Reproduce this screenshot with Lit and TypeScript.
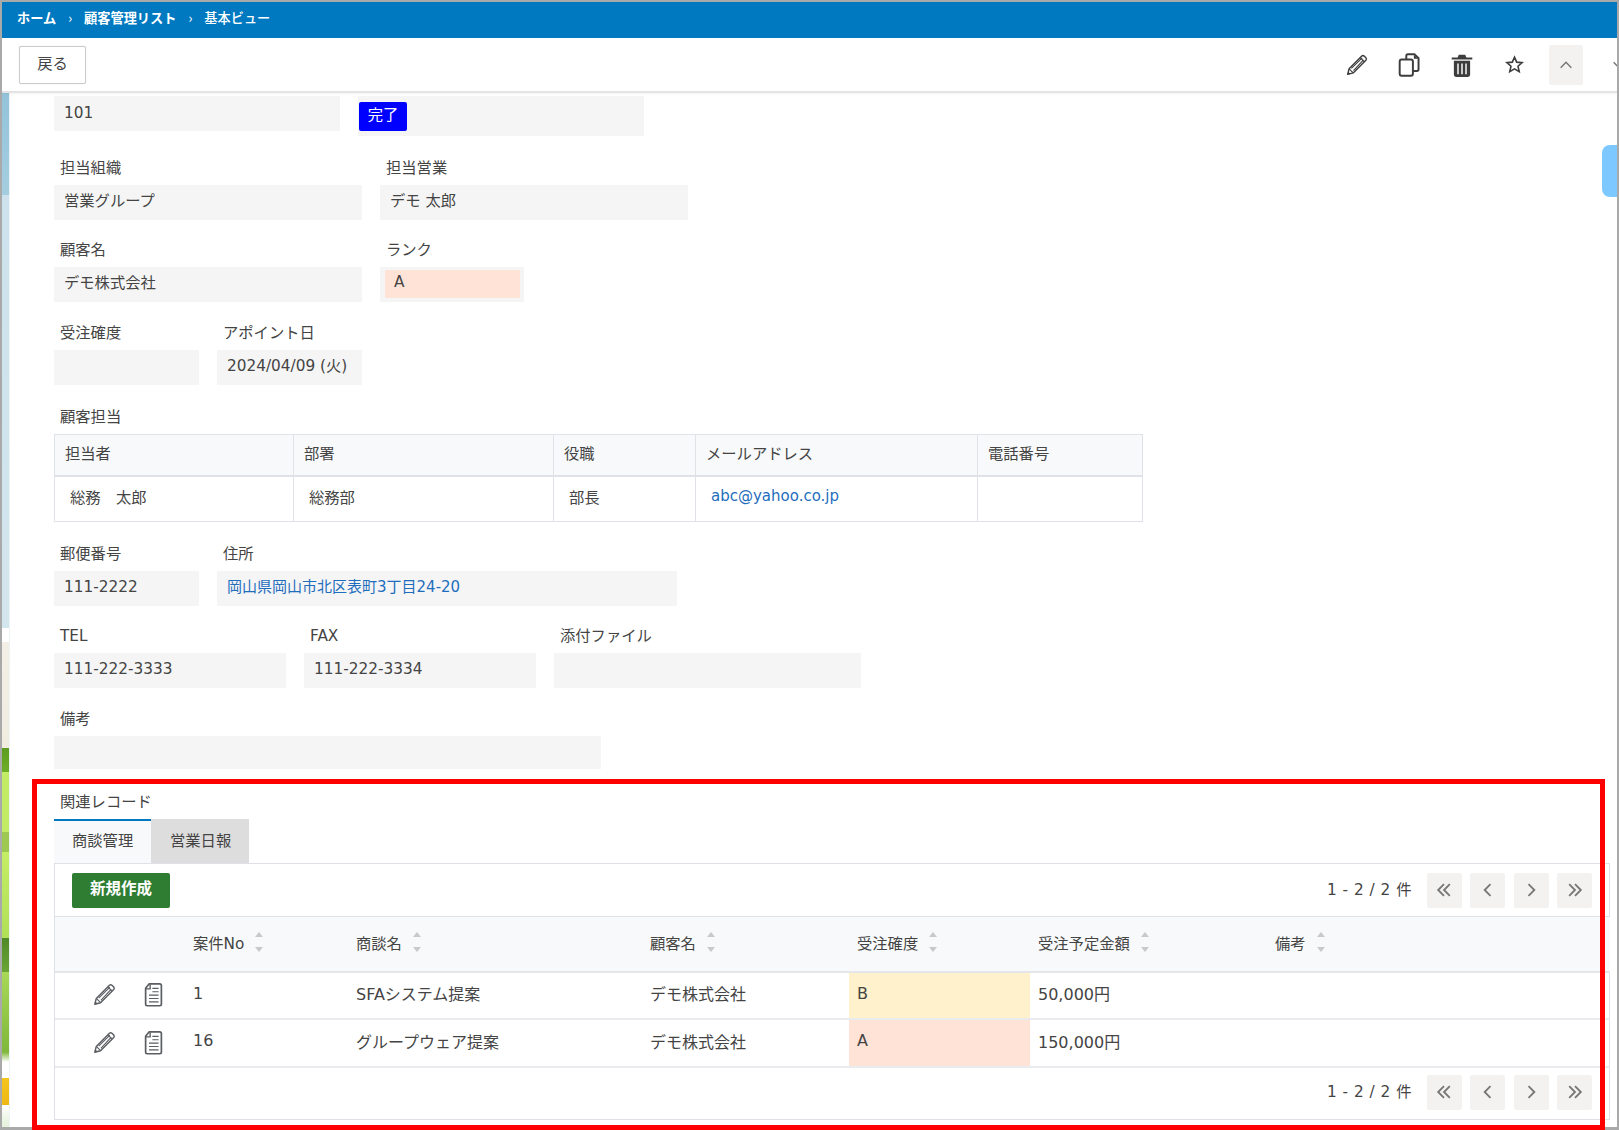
import { LitElement, html, css, svg } from "lit";
import { customElement } from "lit/decorators.js";

const pencil = svg`<path d="M3.4 20.6l1.3-5.1L16.4 3.8a1.6 1.6 0 0 1 2.2 0l1.6 1.6a1.6 1.6 0 0 1 0 2.2L8.5 19.3z" fill="none" stroke="currentColor" stroke-width="1.3" stroke-linejoin="round"/><path d="M4.7 15.5l3.8 3.8M15 5.2l3.8 3.8M6.8 15.2L16.8 5.4M8.8 17.2L18 7.2" fill="none" stroke="currentColor" stroke-width="1"/><path d="M3.2 20.8l.6-2.8 2.2 2.2z" fill="currentColor"/>`;
const docIcon = svg`<path d="M8.2 2.5h9.3a1.5 1.5 0 0 1 1.5 1.5v16.5a1.5 1.5 0 0 1-1.5 1.5h-11A1.5 1.5 0 0 1 5 20.500V6.500z" fill="none" stroke="currentColor" stroke-width="1.5" stroke-linejoin="round"/><path d="M5 7h4V2.800" fill="none" stroke="currentColor" stroke-width="1.2"/><path d="M11 6.500h5.500M11 9.500h5.500M8 12.500h8.500M8 15.500h8.500M8 18.500h8.500" stroke="currentColor" stroke-width="1"/>`;
const copyIcon = svg`<path d="M9.500 6.500V3.500a1.500 1.500 0 0 1 1.500-1.500h6l3.800 3.800v10.200a1.500 1.500 0 0 1-1.500 1.500H16" fill="none" stroke="currentColor" stroke-width="1.800" stroke-linejoin="round"/><path d="M16.500 2.500v3.800h3.800z" fill="currentColor"/><rect x="3.400" y="6.900" width="12.200" height="15" rx="1.800" fill="none" stroke="currentColor" stroke-width="1.800"/>`;
const trashIcon = svg`<path d="M2.500 5h19v2h-19zM9 2.500h6l1 2.500H8z" fill="currentColor"/><path d="M4.500 8h15v13a2 2 0 0 1-2 2h-11a2 2 0 0 1-2-2z" fill="currentColor"/><path d="M8.300 10.500v10M12 10.500v10M15.700 10.500v10" stroke="#e9e9e9" stroke-width="1.500"/>`;
const starIcon = svg`<path d="M12 3.600l2.500 5.700 6.200.6-4.700 4.100 1.400 6.100L12 17l-5.400 3.100L8 14 3.300 9.900l6.200-.6z" fill="none" stroke="currentColor" stroke-width="1.800" stroke-linejoin="miter"/>`;
const chevron = (d: string) => svg`<path d="${d}" fill="none" stroke="currentColor" stroke-width="2.200"/>`;

@customElement("app-root")
export class AppRoot extends LitElement {
  static styles = css`
    :host { display: block; position: relative; width: 1619px; height: 1130px; overflow: hidden; background: #fff;
      font-family: "DejaVu Sans", "Noto Sans CJK JP", sans-serif; font-size: 15.300px; color: #444; }
    * { box-sizing: border-box; }
    .frame { width: 1619px; height: 1130px; border: 2px solid #a9a9a9; border-bottom-width: 3px; overflow: hidden; display: flex; flex-direction: column; background: #fff; }
    .crumbs { flex: none; height: 36px; background: #0079c0; color: #fff; display: flex; align-items: center; padding: 0 0 5px 15px; font-size: 13.200px; font-weight: 700; font-family: "Noto Sans CJK JP", sans-serif; }
    .crumbs .sep { margin: 0 12px; font-weight: 400; font-size: 13px; }
    .crumbs .cur { font-weight: 500; }
    .toolbar { flex: none; height: 55px; border-bottom: 2px solid #e3e3e3; display: flex; align-items: center; padding-left: 17px; box-shadow: 0 1px 2px rgba(0,0,0,.05); position: relative; z-index: 1; }
    .back { width: 67px; height: 38px; border: 1px solid #ccc; border-radius: 2px; background: #fff; display: flex; align-items: center; justify-content: center; padding-bottom: 5px; box-shadow: 0 0 1px rgba(0,0,0,.2); }
    .tools { margin-left: auto; margin-right: -28px; display: flex; flex: none; }
    .slot { width: 52.400px; display: flex; justify-content: center; align-items: center; color: #3d3d3d; flex: none; }
    .slot svg { width: 26px; height: 26px; display: block; }
    .slot.small svg { width: 21px; height: 21px; }
    .sq { width: 34px; height: 40px; border-radius: 2px; display: flex; align-items: center; justify-content: center; color: #777; }
    .sq.on { background: #f3f2f1; }
    .sq svg { width: 16px; height: 16px; }
    .main { flex: 1; display: flex; min-height: 0; }
    .strip { flex: none; width: 8px; border-right: 1px solid #eef3f5;
      background: linear-gradient(to bottom,
        #93c3da 0, #a5cde0 102px, #cde2ec 102px, #d3e6ee 535px, #fff 535px, #fff 549px, #f3efe6 549px, #f1ece0 655px,
        #5c9c20 655px, #6fae28 679px, #c2ec66 679px, #c2ec66 739px, #9dc952 739px, #9dc952 759px, #c4ee66 759px, #b0e058 845px,
        #4f8a28 845px, #6aa536 879px, #a8d858 879px, #7fb83a 959px, #fff 969px, #fff 985px, #f4c51c 985px, #eeb814 1012px, #fff 1012px, #e8f2df 1030px); }
    .content { flex: 1; min-width: 0; padding: 3px 7px 0 44px; display: flex; flex-direction: column; }
    .row { display: flex; gap: 18px; align-items: flex-start; flex: none; }
    .g18 { margin-top: 18px; }
    .g19 { margin-top: 19px; }
    .g20 { margin-top: 20px; }
    .g21 { margin-top: 21px; }
    .g22 { margin-top: 22px; }
    .lab { height: 22px; line-height: 22px; padding: 1px 0 0 6px; margin-bottom: 7px; white-space: nowrap; }
    .val { height: 35px; background: #f5f5f5; padding: 5px 0 0 10px; line-height: 22px; white-space: nowrap; }
    .first { padding-top: 6px; width: 286px; }
    .status { width: 286px; height: 40px; background: #f5f5f5; padding: 6px 0 0 1px; }
    .badge { display: block; width: 48px; height: 29px; background: #0000ff; color: #fff; text-align: center; line-height: 27px; border-radius: 2px; }
    .w145 { width: 145px; }
    .w308 { width: 308px; }
    .w232 { width: 232px; }
    .w307 { width: 307px; }
    .w460 { width: 460px; }
    .w547 { width: 547px; height: 33px; }
    .rank { width: 144px; height: 35px; background: #f5f5f5; padding: 3px 4px 4px 5px; }
    .rank div { height: 28px; background: #ffe3d6; padding-left: 9px; line-height: 24px; border-radius: 1px; }
    a { color: #1f6ebd; text-decoration: none; font-size: 15px; }
    .sec { flex: none; height: 22px; line-height: 22px; padding-left: 6px; margin-bottom: 6px; white-space: nowrap; }
    table { border-collapse: collapse; table-layout: fixed; }
    .contact { width: 1088px; flex: none; }
    .contact th, .contact td { border: 1px solid #dfe2e7; font-weight: 400; text-align: left; }
    .contact th { height: 41px; background: #f8f9fa; padding: 0 0 6px 10px; border-bottom-width: 2px; }
    .contact td { height: 46px; padding: 0 0 5px 15px; }
    .c1 { width: 239px; }
    .c2 { width: 260px; }
    .c3 { width: 142px; }
    .c4 { width: 282px; }
    .c5 { width: 165px; }
    .tabs { display: flex; flex: none; height: 44px; }
    .tab { width: 97px; padding: 9px 0 0 18px; background: #f8f9fa; border-top: 2px solid #0079c0; line-height: 22px; white-space: nowrap; }
    .tab.off { background: #dddddd; border-top: 0; width: 98px; padding-top: 11px; padding-left: 19px; }
    .panel { flex: none; height: 257px; border: 1px solid #dee2e6; display: flex; flex-direction: column; }
    .bar { flex: none; display: flex; align-items: center; justify-content: space-between; padding: 0 17px; }
    .bar.top { height: 52px; }
    .bar.bottom { flex: 1; padding-bottom: 2px; }
    .new { width: 98px; height: 35px; background: #2e7d32; color: #fff; font-weight: 700; text-align: center; line-height: 28px; border-radius: 2px; font-size: 15.500px; font-family: "Noto Sans CJK JP", sans-serif; }
    .pager { display: flex; align-items: center; gap: 8.500px; margin-left: auto; }
    .count { margin-right: 6px; letter-spacing: .5px; padding-bottom: 5px; }
    .pg { width: 35px; height: 35px; background: #f3f2f1; border-radius: 2px; display: flex; align-items: center; justify-content: center; color: #777; }
    .pg svg { width: 20px; height: 20px; }
    .list { width: 1555px; flex: none; }
    .list th, .list td { font-weight: 400; text-align: left; padding: 0 0 4px 8px; white-space: nowrap; }
    .list th { height: 55px; background: #f8f9fa; border-top: 1px solid #dee2e6; border-bottom: 2px solid #e4e6ea; padding-bottom: 3px; }
    .list td { height: 47.500px; border-bottom: 2px solid #e9ebee; font-size: 16px; }
    .l0 { width: 130px; }
    .l1 { width: 163px; }
    .l2 { width: 294px; }
    .l3 { width: 207px; }
    .l4 { width: 181px; }
    .l5 { width: 237px; }
    .l6 { width: 343px; }
    .th { display: inline-flex; align-items: center; }
    .sort { display: inline-flex; flex-direction: column; gap: 10px; margin-left: 11px; }
    .sort i { display: block; width: 0; height: 0; border-left: 4px solid transparent; border-right: 4px solid transparent; }
    .sort .u { border-bottom: 5px solid #c9c9c9; }
    .sort .d { border-top: 5px solid #c9c9c9; }
    .list td.acts { padding: 0 0 0 36px; }
    .acts div { display: flex; align-items: center; color: #5a5d61; gap: 22px; padding-bottom: 1px; }
    .acts svg { width: 27px; height: 27px; display: block; }
    .list td.b { background: #fff1cc; }
    .list td.a { background: #ffe3d6; }
    .scrolltab { position: absolute; right: 2px; top: 145px; width: 15px; height: 52px; background: #7cc8ff; border-radius: 8px 0 0 8px; }
    .redbox { position: absolute; left: 32px; top: 779px; width: 1573px; height: 351px; border: 5px solid #ff0000; pointer-events: none; }
  `;

  private field(label: string, value: unknown, cls: string) {
    return html`<div><div class="lab">${label}</div><div class="val ${cls}">${value}</div></div>`;
  }

  private pager() {
    const b = (d: string) => html`<div class="pg"><svg viewBox="0 0 24 24">${chevron(d)}</svg></div>`;
    return html`<div class="pager">
      <span class="count">1 - 2 / 2 件</span>
      ${b("M12 5l-7 7 7 7M19 5l-7 7 7 7")}${b("M15 5l-7 7 7 7")}${b("M9 5l7 7-7 7")}${b("M5 5l7 7-7 7M12 5l7 7-7 7")}
    </div>`;
  }

  private sorted(t: string) {
    return html`<th><span class="th">${t}<span class="sort"><i class="u"></i><i class="d"></i></span></span></th>`;
  }

  private acts() {
    return html`<td class="acts"><div><svg viewBox="0 0 24 24">${pencil}</svg><svg viewBox="0 0 24 24">${docIcon}</svg></div></td>`;
  }

  render() {
    return html`<div class="frame">
      <div class="crumbs"><span>ホーム</span><span class="sep">›</span><span>顧客管理リスト</span><span class="sep">›</span><span class="cur">基本ビュー</span></div>
      <div class="toolbar">
        <div class="back">戻る</div>
        <div class="tools">
          <div class="slot"><svg viewBox="0 0 24 24">${pencil}</svg></div>
          <div class="slot"><svg viewBox="0 0 24 24">${copyIcon}</svg></div>
          <div class="slot"><svg viewBox="0 0 24 24">${trashIcon}</svg></div>
          <div class="slot small"><svg viewBox="0 0 24 24">${starIcon}</svg></div>
          <div class="slot"><div class="sq on"><svg viewBox="0 0 24 24">${chevron("M4 16l8-8 8 8")}</svg></div></div>
          <div class="slot"><div class="sq"><svg viewBox="0 0 24 24">${chevron("M4 8l8 8 8-8")}</svg></div></div>
        </div>
      </div>
      <div class="main">
        <div class="strip"></div>
        <div class="content">
          <div class="row">
            <div class="val first">101</div>
            <div class="status"><span class="badge">完了</span></div>
          </div>
          <div class="row g20">
            ${this.field("担当組織", "営業グループ", "w308")}
            ${this.field("担当営業", "デモ 太郎", "w308")}
          </div>
          <div class="row g18">
            ${this.field("顧客名", "デモ株式会社", "w308")}
            <div><div class="lab">ランク</div><div class="rank"><div>A</div></div></div>
          </div>
          <div class="row g19">
            ${this.field("受注確度", "", "w145")}
            ${this.field("アポイント日", "2024/04/09 (火)", "w145")}
          </div>
          <div class="sec g21">顧客担当</div>
          <table class="contact">
            <colgroup><col class="c1" /><col class="c2" /><col class="c3" /><col class="c4" /><col class="c5" /></colgroup>
            <tr><th>担当者</th><th>部署</th><th>役職</th><th>メールアドレス</th><th>電話番号</th></tr>
            <tr><td>総務　太郎</td><td>総務部</td><td>部長</td><td><a>abc@yahoo.co.jp</a></td><td></td></tr>
          </table>
          <div class="row g20">
            ${this.field("郵便番号", "111-2222", "w145")}
            ${this.field("住所", html`<a>岡山県岡山市北区表町3丁目24-20</a>`, "w460")}
          </div>
          <div class="row g18">
            ${this.field("TEL", "111-222-3333", "w232")}
            ${this.field("FAX", "111-222-3334", "w232")}
            ${this.field("添付ファイル", "", "w307")}
          </div>
          <div class="row g19">
            ${this.field("備考", "", "w547")}
          </div>
          <div class="sec g22">関連レコード</div>
          <div class="tabs"><div class="tab">商談管理</div><div class="tab off">営業日報</div></div>
          <div class="panel">
            <div class="bar top"><div class="new">新規作成</div>${this.pager()}</div>
            <table class="list">
              <colgroup><col class="l0" /><col class="l1" /><col class="l2" /><col class="l3" /><col class="l4" /><col class="l5" /><col class="l6" /></colgroup>
              <tr><th></th>${["案件No", "商談名", "顧客名", "受注確度", "受注予定金額", "備考"].map((t) => this.sorted(t))}</tr>
              <tr>${this.acts()}<td>1</td><td>SFAシステム提案</td><td>デモ株式会社</td><td class="b">B</td><td>50,000円</td><td></td></tr>
              <tr>${this.acts()}<td>16</td><td>グループウェア提案</td><td>デモ株式会社</td><td class="a">A</td><td>150,000円</td><td></td></tr>
            </table>
            <div class="bar bottom">${this.pager()}</div>
          </div>
        </div>
      </div>
    </div>
    <div class="scrolltab"></div>
    <div class="redbox"></div>`;
  }
}
